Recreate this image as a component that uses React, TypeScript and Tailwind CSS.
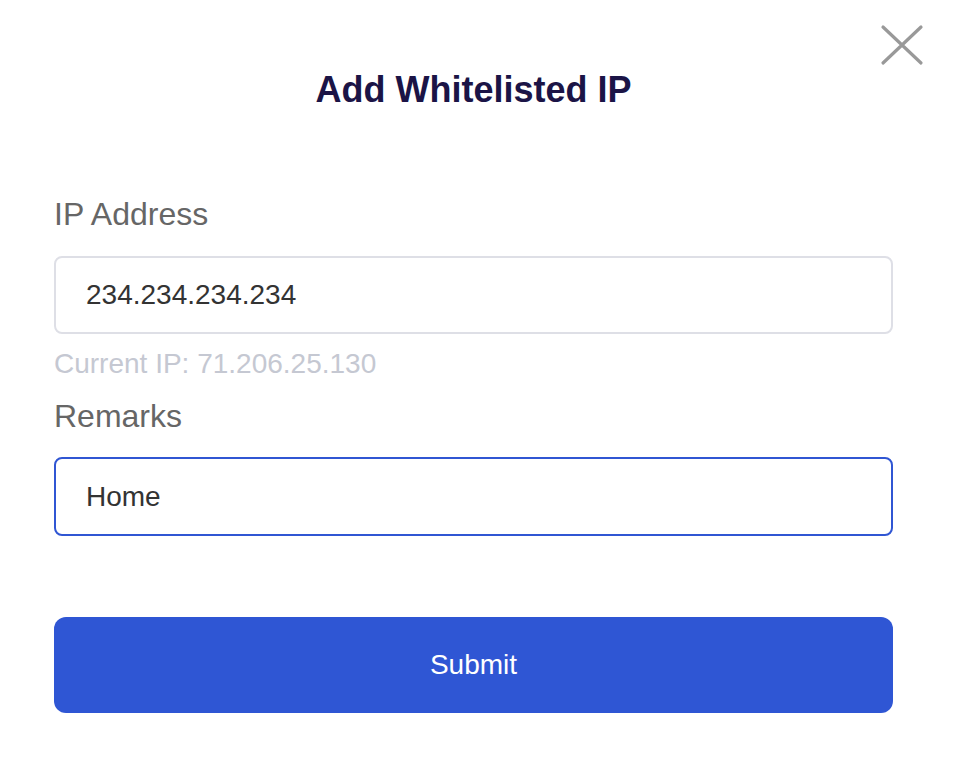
import React, { useState } from "react";

export default function App() {
  const [ip, setIp] = useState("234.234.234.234");
  const [remarks, setRemarks] = useState("Home");

  return (
    <div
      className="relative w-[955px] h-[783px] bg-white"
      style={{ fontFamily: '"Liberation Sans", Arial, sans-serif' }}
    >
      <button className="absolute top-[24px] left-[880px] w-[44px] h-[42px]" aria-label="close">
        <svg width="44" height="42" viewBox="0 0 44 42" fill="none">
          <path d="M3 3L41 39M41 3L3 39" stroke="#999999" strokeWidth="3.2" strokeLinecap="round" />
        </svg>
      </button>

      <div className="flex flex-col pl-[54px] w-[893px] pt-[70px]">
        <h2 className="text-center text-[36px] leading-[40px] font-bold text-[#1b1446]">
          Add Whitelisted IP
        </h2>

        <label className="mt-[86px] text-[32px] leading-[36px] text-[#666666]">IP Address</label>
        <input
          value={ip}
          onChange={(e) => setIp(e.target.value)}
          className="mt-[24px] h-[78px] w-full rounded-[8px] border-2 border-[#dedfe6] px-[30px] text-[28px] text-[#333333] outline-none"
        />
        <p className="mt-[14px] text-[28px] leading-[32px] text-[#c5c8d2]">Current IP: 71.206.25.130</p>

        <label className="mt-[18px] text-[32px] leading-[36px] text-[#666666]">Remarks</label>
        <input
          value={remarks}
          onChange={(e) => setRemarks(e.target.value)}
          className="mt-[23px] h-[79px] w-full rounded-[8px] border-2 border-[#3056d3] px-[30px] text-[28px] text-[#333333] outline-none"
        />

        <button className="mt-[81px] h-[96px] w-full rounded-[12px] bg-[#2f56d4] text-[28px] text-white">
          Submit
        </button>
      </div>
    </div>
  );
}
